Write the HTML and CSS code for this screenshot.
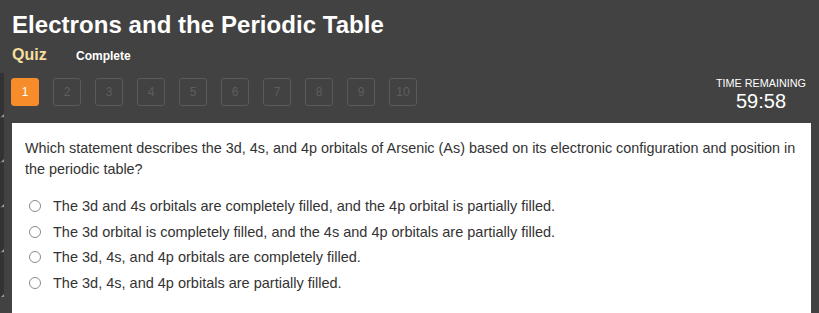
FILE: index.html
```html
<!DOCTYPE html>
<html>
<head>
<meta charset="utf-8">
<link rel="stylesheet" href="styles.css">
</head>
<body>
<div class="side">
  <div class="side-seg"></div>
  <div class="side-seg"></div>
  <div class="side-seg"></div>
  <div class="side-seg"></div>
  <div class="side-seg"></div>
</div>
<div class="page">
  <h1 class="title">Electrons and the Periodic Table</h1>
  <div class="sub">
    <span class="quiz">Quiz</span>
    <span class="status">Complete</span>
  </div>
  <div class="navrow">
    <div class="nums">
      <span class="num active">1</span>
      <span class="num">2</span>
      <span class="num">3</span>
      <span class="num">4</span>
      <span class="num">5</span>
      <span class="num">6</span>
      <span class="num">7</span>
      <span class="num">8</span>
      <span class="num">9</span>
      <span class="num">10</span>
    </div>
    <div class="timer">
      <div class="timer-label">TIME REMAINING</div>
      <div class="timer-value">59:58</div>
    </div>
  </div>
  <div class="card">
    <p class="question">Which statement describes the 3d, 4s, and 4p orbitals of Arsenic (As) based on its electronic configuration and position in the periodic table?</p>
    <ul class="options">
      <li class="option"><span class="radio"></span><span>The 3d and 4s orbitals are completely filled, and the 4p orbital is partially filled.</span></li>
      <li class="option"><span class="radio"></span><span>The 3d orbital is completely filled, and the 4s and 4p orbitals are partially filled.</span></li>
      <li class="option"><span class="radio"></span><span>The 3d, 4s, and 4p orbitals are completely filled.</span></li>
      <li class="option"><span class="radio"></span><span>The 3d, 4s, and 4p orbitals are partially filled.</span></li>
    </ul>
  </div>
</div>
</body>
</html>
```

FILE: styles.css
```css
html, body {
  margin: 0;
  padding: 0;
  background: #424242;
  width: 819px;
  height: 313px;
  overflow: hidden;
  font-family: "Liberation Sans", Arial, sans-serif;
}
body {
  position: relative;
}
.side {
  position: absolute;
  left: 0;
  top: 73px;
  width: 4px;
  display: flex;
  flex-direction: column;
}
.side-seg {
  height: 44px;
  margin-bottom: 1px;
  background: #333333;
  position: relative;
}
.side-seg::after {
  content: "";
  position: absolute;
  right: 0;
  bottom: 0;
  width: 0;
  height: 0;
  border-left: 3px solid transparent;
  border-bottom: 3px solid #9a9a9a;
}
.page {
  padding: 0 8px 0 12px;
}
.title {
  margin: 0;
  padding-top: 11px;
  font-size: 24px;
  line-height: 28px;
  font-weight: bold;
  color: #ffffff;
  letter-spacing: 0.05px;
}
.sub {
  display: flex;
  align-items: baseline;
  margin-top: 7px;
  height: 20px;
}
.quiz {
  color: #f6df9e;
  font-weight: bold;
  font-size: 16px;
  width: 64px;
}
.status {
  color: #ffffff;
  font-weight: bold;
  font-size: 12px;
}
.navrow {
  display: flex;
  justify-content: space-between;
  align-items: flex-start;
  margin-top: 12px;
  height: 45px;
}
.nums {
  display: flex;
  gap: 14px;
  margin-left: -1px;
}
.num {
  box-sizing: border-box;
  width: 28px;
  height: 28px;
  border: 1px solid #5a5a5a;
  border-radius: 3px;
  color: #5e5e5e;
  font-size: 12px;
  display: flex;
  align-items: center;
  justify-content: center;
}
.num.active {
  background: #f68d2a;
  border-color: #f68d2a;
  color: #ffffff;
}
.timer {
  text-align: center;
  color: #ffffff;
  margin-top: -2px;
  margin-right: 5px;
}
.timer-label {
  font-size: 10.8px;
  line-height: 14px;
}
.timer-value {
  font-size: 20px;
  line-height: 22px;
}
.card {
  background: #ffffff;
  height: 200px;
  padding: 15px 0 0 13px;
  box-sizing: border-box;
}
.question {
  margin: 0 -3px 0 0;
  font-size: 14.4px;
  line-height: 21px;
  color: #333333;
}
.options {
  list-style: none;
  margin: 13px 0 0 0;
  padding: 0 0 0 4px;
}
.option {
  display: flex;
  align-items: center;
  height: 25.8px;
  font-size: 14.5px;
  color: #333333;
}
.radio {
  box-sizing: border-box;
  width: 12px;
  height: 12px;
  border: 1px solid #8a8a8a;
  border-radius: 50%;
  margin-right: 12px;
  flex-shrink: 0;
}
```
